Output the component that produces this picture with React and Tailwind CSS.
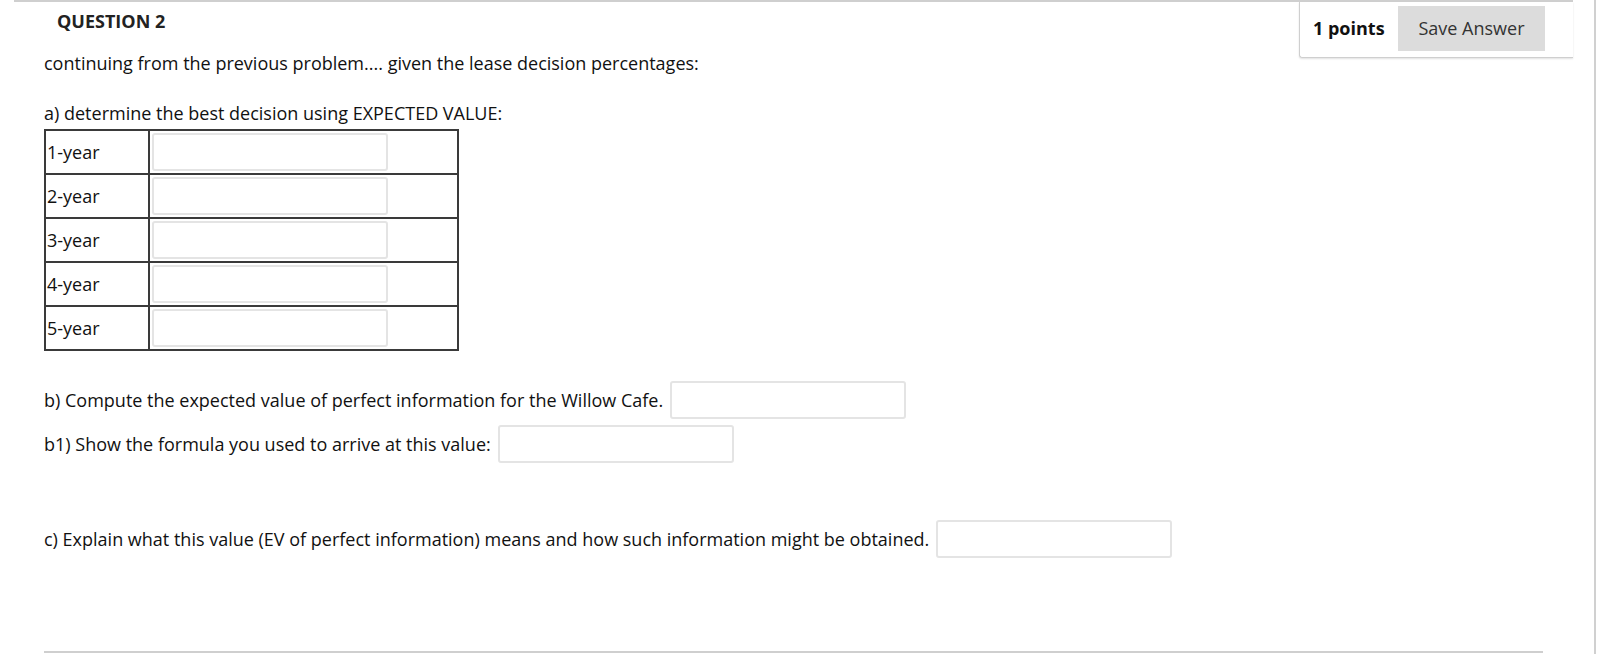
import React from 'react';

const years = ['1-year', '2-year', '3-year', '4-year', '5-year'];

const AnswerBox = ({ className = '' }) => (
  <input
    type="text"
    className={`h-[38px] w-[236px] rounded-[3px] border-2 border-[#e4e4e4] bg-white outline-none ${className}`}
  />
);

const App = () => {
  return (
    <div className="flex h-[654px] w-[1598px] overflow-hidden bg-white font-['Open_Sans',sans-serif] text-[18px] text-[#111]">
      <div className="w-[1594px] shrink-0 pl-[14px] pr-[21px]">
        <div className="border-t-2 border-[#cfcfcf]">
          <div className="flex items-start">
            <div className="flex-1 pl-[30px]">
              <h2 className="pl-[13px] pt-[7px] text-[18px] font-bold leading-6 text-[#222]">
                QUESTION 2
              </h2>
              <p className="mt-[18px] leading-6">
                continuing from the previous problem.... given the lease decision percentages:
              </p>
              <p className="mt-[26px] leading-6">
                a) determine the best decision using EXPECTED VALUE:
              </p>
              <table className="mt-[4px] w-[415px] border-separate border-spacing-0 border border-[#3a3a3a]">
                <tbody>
                  {years.map((y) => (
                    <tr key={y}>
                      <td className="w-[104px] border border-[#3a3a3a] px-[1px] leading-6">{y}</td>
                      <td className="border border-[#3a3a3a] p-[2px]">
                        <AnswerBox />
                      </td>
                    </tr>
                  ))}
                </tbody>
              </table>

              <div className="mt-[30px] flex items-center gap-[7px]">
                <span className="leading-6">b) Compute the expected value of perfect information for the Willow Cafe.</span>
                <AnswerBox />
              </div>
              <div className="mt-[6px] flex items-center gap-[7px]">
                <span className="leading-6">b1) Show the formula you used to arrive at this value:</span>
                <AnswerBox />
              </div>
              <div className="mt-[57px] flex items-center gap-[7px]">
                <span className="leading-6">
                  c) Explain what this value (EV of perfect information) means and how such information might be obtained.
                </span>
                <AnswerBox />
              </div>
            </div>

            <div className="flex w-[274px] shrink-0 items-center rounded-bl-[3px] border-b border-l border-[#cfcfcf] pb-[6px] pl-[13px] pt-[4px] shadow-[0_1px_2px_rgba(0,0,0,0.12)]">
              <span className="w-[85px] font-bold text-[#111]">1 points</span>
              <button className="h-[45px] w-[147px] bg-[#dcdcdc] text-[18px] text-[#333]">
                Save Answer
              </button>
            </div>
          </div>

          <div className="mx-[30px] mt-[93px] h-[2px] bg-[#cfcfcf]" />
        </div>
      </div>
      <div className="h-full w-[2px] shrink-0 bg-[#d0d0d0]" />
    </div>
  );
};

export default App;
